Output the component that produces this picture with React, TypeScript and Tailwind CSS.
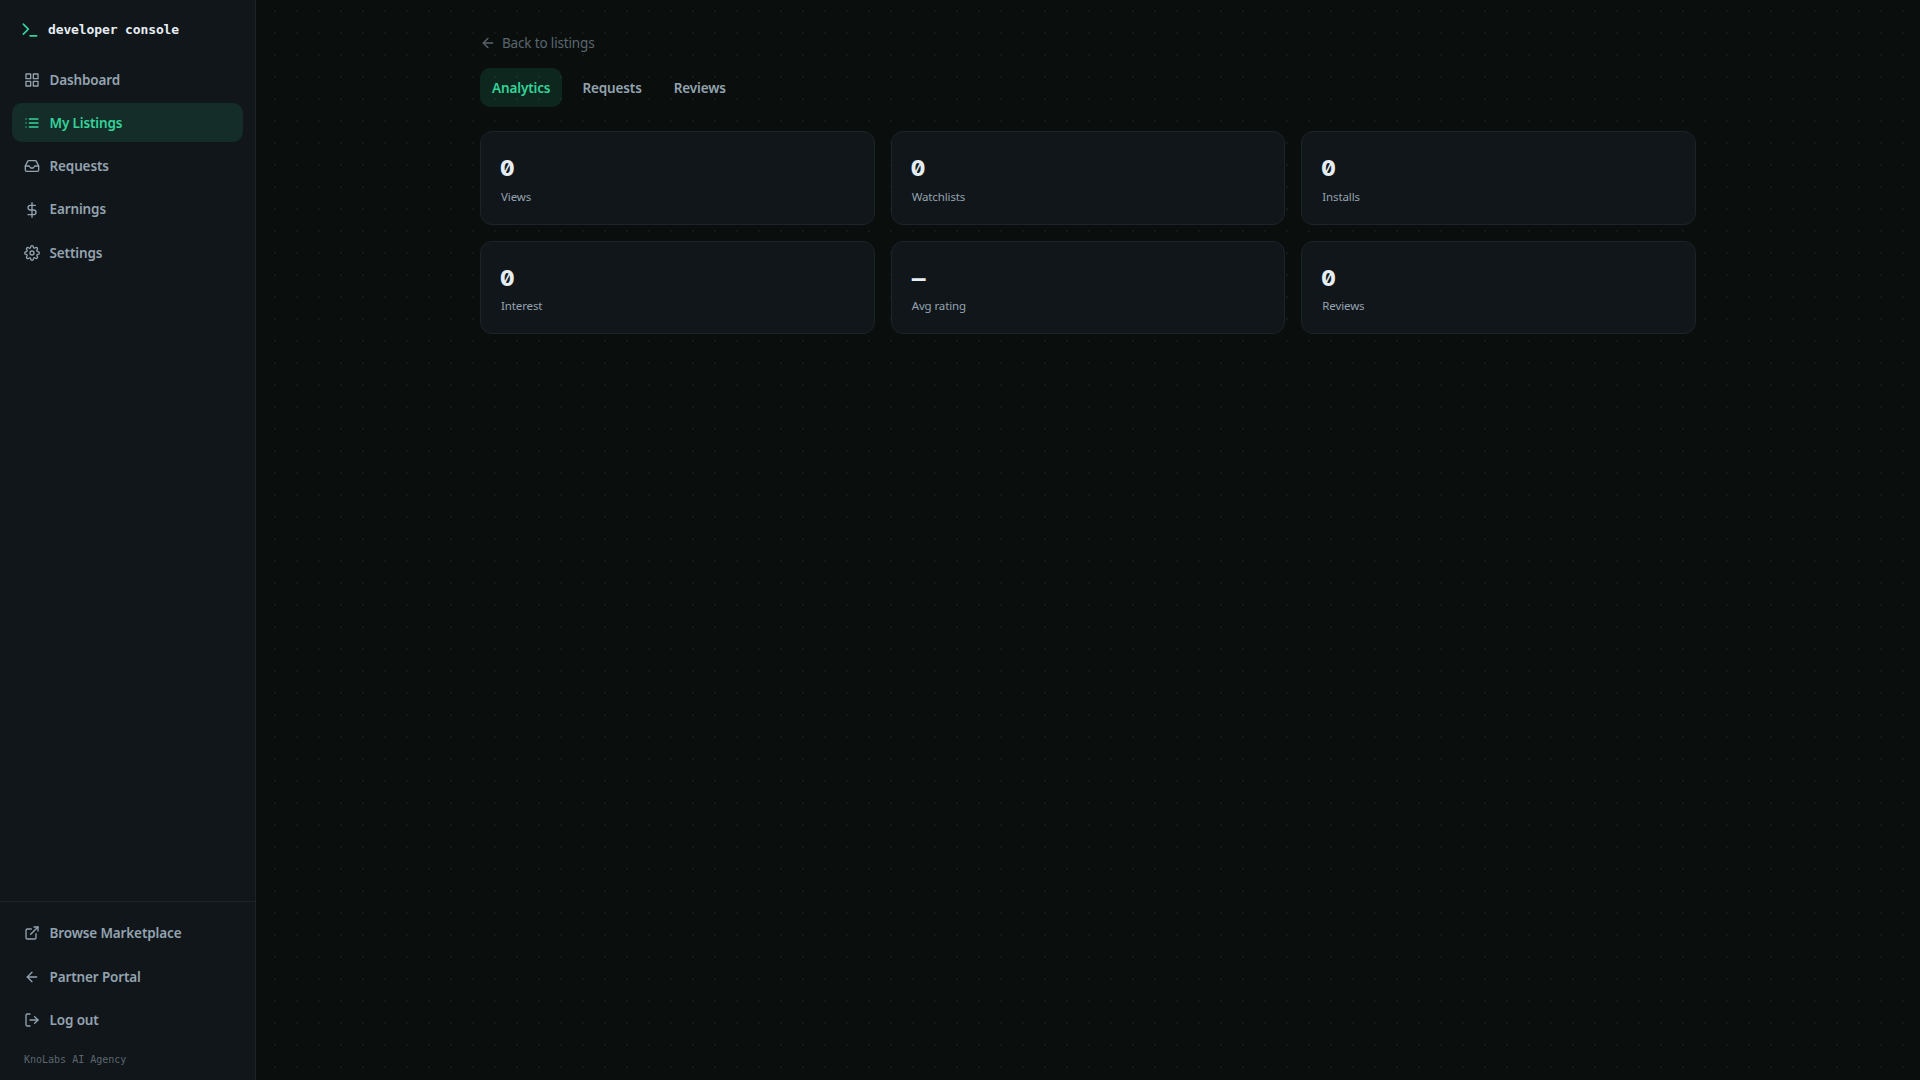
import type { IconType } from 'react-icons';
import {
  FiArrowLeft,
  FiDollarSign,
  FiExternalLink,
  FiGrid,
  FiInbox,
  FiList,
  FiLogOut,
  FiSettings,
  FiTerminal,
} from 'react-icons/fi';

const NAV_ITEMS = [
  { label: 'Dashboard', icon: FiGrid },
  { label: 'My Listings', icon: FiList, active: true },
  { label: 'Requests', icon: FiInbox },
  { label: 'Earnings', icon: FiDollarSign },
  { label: 'Settings', icon: FiSettings },
];

const FOOTER_ITEMS = [
  { label: 'Browse Marketplace', icon: FiExternalLink },
  { label: 'Partner Portal', icon: FiArrowLeft },
  { label: 'Log out', icon: FiLogOut },
];

const TABS = ['Analytics', 'Requests', 'Reviews'];

const STATS = [
  { label: 'Views', value: 0 },
  { label: 'Watchlists', value: 0 },
  { label: 'Installs', value: 0 },
  { label: 'Interest', value: 0 },
  { label: 'Avg rating', value: null },
  { label: 'Reviews', value: 0 },
];

export default function App() {
  return (
    <div className="flex h-screen overflow-hidden bg-[#0a0f0d] bg-[radial-gradient(circle,#141a1a_1px,transparent_1px)] bg-[size:22px_22px] font-['Noto_Sans',sans-serif] text-[#e6edf3]">
      <aside className="flex w-64 shrink-0 flex-col border-r border-[#1c2329] bg-[#11161a]">
        <div className="flex h-[60px] items-center gap-2 px-5">
          <FiTerminal className="h-5 w-5 text-[#34d399]" />
          <span className="font-['DejaVu_Sans_Mono',monospace] text-[13px] font-bold tracking-[-0.12px]">developer console</span>
        </div>
        <nav className="flex flex-col gap-[4.3px] px-3 pt-[0.2px]">
          {NAV_ITEMS.map((item) => (
            <NavLink key={item.label} {...item} />
          ))}
        </nav>
        <div className="mt-auto border-t border-[#1c2329] px-3 pt-3">
          <div className="flex flex-col gap-[4.3px]">
            {FOOTER_ITEMS.map((item) => (
              <NavLink key={item.label} {...item} />
            ))}
          </div>
          <p className="px-3 pb-[13.5px] pt-3 font-['DejaVu_Sans_Mono',monospace] text-[10px] leading-[15px] text-[#5b6670]">
            KnoLabs AI Agency
          </p>
        </div>
      </aside>

      <main className="flex-1">
        <div className="mx-auto max-w-7xl px-8 pt-8">
          <a href="#" className="flex h-[21px] items-center gap-1.5 text-[13.5px] tracking-[-0.16px] text-[#5b6670]">
            <FiArrowLeft className="h-4 w-4" />
            <span className="pt-0.5">Back to listings</span>
          </a>
          <div className="mt-[15px] flex gap-2">
            {TABS.map((tab) => (
              <button
                key={tab}
                className={`h-[39px] rounded-[10px] px-3 pt-0.5 text-[13.5px] font-semibold tracking-[-0.13px] ${tab === 'Analytics' ? 'bg-[#34d399]/12 text-[#34d399]' : 'text-[#94a3b0]'}`}
              >
                {tab}
              </button>
            ))}
          </div>
          <div className="mt-[24.4px] grid grid-cols-3 gap-4">
            {STATS.map((stat) => (
              <StatCard key={stat.label} {...stat} />
            ))}
          </div>
        </div>
      </main>
    </div>
  );
}

function NavLink({ label, icon: Icon, active }: { label: string; icon: IconType; active?: boolean }) {
  return (
    <a
      href="#"
      className={`flex h-[39px] items-center gap-[9.5px] rounded-[10px] px-3 text-[13.5px] font-semibold tracking-[-0.13px] ${active ? 'bg-[#34d399]/12 text-[#34d399]' : 'text-[#94a3b0]'}`}
    >
      <Icon className="h-4 w-4 shrink-0" />
      {label}
    </a>
  );
}

function StatCard({ label, value }: { label: string; value: number | null }) {
  return (
    <div className="h-[93.5px] rounded-xl border border-[#1c2329] bg-[#11161a] p-5">
      <div className="h-8 text-[21px] font-bold leading-8">
        {value === null ? (
          <span className="font-['DejaVu_Sans_Mono',monospace] text-[23px]">—</span>
        ) : (
          <span className="-ml-px font-['Inter',sans-serif] font-extrabold slashed-zero">{value}</span>
        )}
      </div>
      <div className="mt-[4.3px] text-[11.5px] leading-4 tracking-[-0.12px] text-[#94a3b0]">{label}</div>
    </div>
  );
}
